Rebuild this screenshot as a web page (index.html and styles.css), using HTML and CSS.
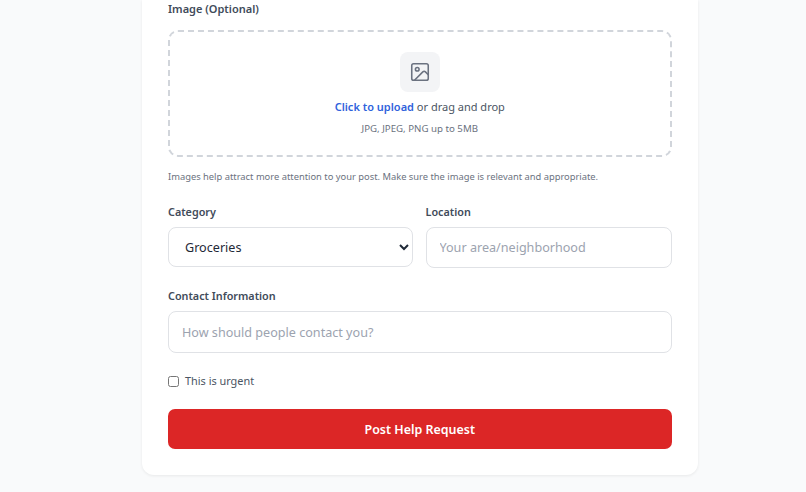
FILE: index.html
```html
<!DOCTYPE html>
<html lang="en">
<head>
<meta charset="utf-8">
<title>Post Help Request</title>
<link rel="stylesheet" href="styles.css">
</head>
<body>
<main class="card">
  <form class="form">
    <div class="field image-field">
      <label class="label label-image">Image (Optional)</label>
      <div class="dropzone">
        <div class="icon-box">
          <svg class="icon" viewBox="0 0 24 24" fill="none" stroke="currentColor" stroke-width="1.7" stroke-linecap="round" stroke-linejoin="round"><rect x="3" y="3" width="18" height="18" rx="2"/><circle cx="9" cy="9" r="2"/><path d="m21 15-3.086-3.086a2 2 0 0 0-2.828 0L6 21"/></svg>
        </div>
        <p class="drop-text"><span class="link">Click to upload</span> or drag and drop</p>
        <p class="drop-hint">JPG, JPEG, PNG up to 5MB</p>
      </div>
      <p class="hint">Images help attract more attention to your post. Make sure the image is relevant and appropriate.</p>
    </div>
    <div class="row">
      <div class="field">
        <label class="label">Category</label>
        <select class="control select"><option>Groceries</option></select>
      </div>
      <div class="field">
        <label class="label">Location</label>
        <input class="control" type="text" placeholder="Your area/neighborhood">
      </div>
    </div>
    <div class="field contact">
      <label class="label">Contact Information</label>
      <input class="control" type="text" placeholder="How should people contact you?">
    </div>
    <label class="check"><input class="checkbox" type="checkbox"><span>This is urgent</span></label>
    <button class="submit" type="button">Post Help Request</button>
  </form>
</main>
</body>
</html>
```
FILE: styles.css
```css
* { box-sizing: border-box; }
html, body { margin: 0; height: 492px; overflow: hidden; }
body {
  background: #f9fafb;
  font-family: "Noto Sans", "Open Sans", sans-serif;
  color: #374151;
}
.card {
  width: 556px;
  margin-left: 142px;
  height: 475px;
  background: #fff;
  border-radius: 0 0 12px 12px;
  box-shadow: 0 1px 3px rgba(0,0,0,.07);
  padding: 0 26.5px 0 26px;
}
.form { display: flex; flex-direction: column; }
.field { display: flex; flex-direction: column; }
.image-field { margin-bottom: 18px; }
.label {
  font-size: 10.8px;
  line-height: 18px;
  font-weight: 600;
  color: #414b5a;
  margin-bottom: 6px;
}
.label-image { margin-bottom: 12px; font-size: 11px; }
.dropzone {
  height: 127px;
  border: 2px dashed #d1d5db;
  border-radius: 10px;
  display: flex;
  flex-direction: column;
  align-items: center;
  padding-top: 20px;
}
.icon-box {
  width: 40px; height: 40px;
  border-radius: 8px;
  background: #f3f4f6;
  display: flex; align-items: center; justify-content: center;
  color: #6b7280;
}
.icon { width: 22px; height: 22px; }
.drop-text { margin: 6px 0 0; font-size: 11px; line-height: 18px; color: #4b5563; }
.link { color: #2f62dc; font-weight: 600; }
.drop-hint { margin: 5px 0 0; font-size: 9.7px; line-height: 16px; color: #6b7280; }
.hint { margin: 12px 0 0; font-size: 9.35px; line-height: 16px; color: #6b7280; }
.row { display: grid; grid-template-columns: 245px 246px; column-gap: 12.5px; margin-bottom: 19px; }
.control {
  width: 100%;
  height: 41px;
  border: 1px solid #e0e2e6;
  border-radius: 8px;
  padding: 0 13px;
  font-family: inherit;
  font-size: 12.6px;
  background: #fff;
  color: #1f2937;
}
.control::placeholder { color: #9ca3af; opacity: 1; }
.select { height: 40px; padding-left: 12px; }
.contact .control { height: 42px; }
.check {
  display: flex; align-items: center; gap: 6px;
  margin-top: 19px;
  font-size: 10.9px; line-height: 18px; color: #4b5563;
}
.checkbox { width: 11px; height: 11px; margin: 0; }
.submit {
  margin-top: 19px;
  height: 40px;
  border: 0;
  border-radius: 7px;
  background: #dc2626;
  color: #fff;
  font-family: inherit;
  font-size: 12.45px;
  font-weight: 600;
}
```
